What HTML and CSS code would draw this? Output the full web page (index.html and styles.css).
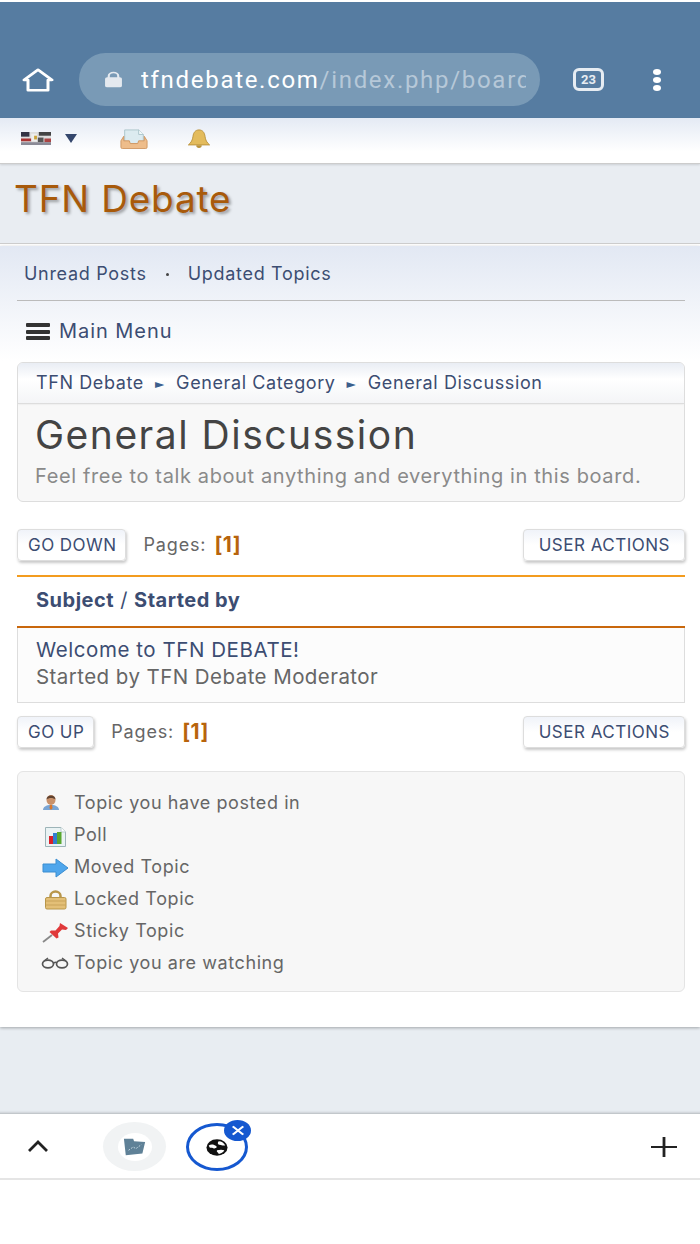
FILE: index.html
```html
<!DOCTYPE html>
<html lang="en">
<head>
<meta charset="utf-8">
<title>General Discussion</title>
<link rel="stylesheet" href="styles.css">
</head>
<body>
<header class="chrome">
  <svg class="ico-home" viewBox="0 0 32 28" width="32" height="24" preserveAspectRatio="none"><path d="M2 14 16 2l14 12h-4v12H6V14z" fill="none" stroke="#fff" stroke-width="3" stroke-linejoin="round"/></svg>
  <div class="omnibox">
    <svg class="ico-lock" viewBox="0 0 18 22" width="19" height="17" preserveAspectRatio="none"><path d="M4.500 9V6.500a4.500 4.500 0 0 1 9 0V9" fill="none" stroke="#e4e9ef" stroke-width="2"/><rect x="1" y="8" width="16" height="13" rx="2" fill="#e4e9ef"/></svg>
    <div class="url"><span class="url-host">tfndebate.com</span><span class="url-path">/index.php/board</span></div>
  </div>
  <div class="tabs">23</div>
  <div class="dots"><i></i><i></i><i></i></div>
</header>

<div class="userbar">
  <svg class="flag" viewBox="0 0 32 14" width="30" height="13" preserveAspectRatio="none"><rect width="32" height="14" fill="#ddd"/><rect width="9" height="5" fill="#334"/><rect x="0" y="7" width="11" height="3" fill="#a33"/><rect x="11" y="2" width="6" height="8" fill="#eee"/><rect x="14" y="4" width="3" height="4" fill="#c9a23a"/><rect x="19" y="0" width="13" height="4" fill="#444"/><rect x="18" y="6" width="6" height="5" fill="#555"/><rect x="25" y="7" width="7" height="4" fill="#a44"/><rect x="0" y="11" width="32" height="3" fill="#8a8a96"/></svg>
  <span class="caret"></span>
  <svg class="inbox" viewBox="0 0 30 22" width="28" height="20" preserveAspectRatio="none"><path d="M5 1h15l5 5v10H5z" fill="#dcebf0" stroke="#a9c3ca"/><path d="M20 1v5h5" fill="#f4fafb" stroke="#a9c3ca"/><path d="M4 8 1 13v7a1.500 1.500 0 0 0 1.500 1.500h25A1.500 1.500 0 0 0 29 20v-7l-3-5v5h-6l-1 3h-8l-1-3H4z" fill="#eebd8b" stroke="#cf9660"/></svg>
  <svg class="bell" viewBox="0 0 26 22" width="24" height="20" preserveAspectRatio="none"><path d="M13 1c4 0 6 3 6.500 7 .4 4 2 7 5 9.500H1.500c3-2.500 4.600-5.500 5-9.500C7 4 9 1 13 1z" fill="#e3bb5c" stroke="#b9923a"/><path d="M10 18h6a3 3 0 0 1-6 0z" fill="#b9923a"/></svg>
</div>

<div class="forumhead"><h1 class="forumtitle">TFN Debate</h1></div>

<main class="content">
  <nav class="quicklinks"><a>Unread Posts</a><span class="sep"></span><a>Updated Topics</a></nav>
  <div class="mainmenu"><span class="burger"><i></i><i></i><i></i></span><span>Main Menu</span></div>

  <section class="boardcard">
    <div class="crumbs"><a>TFN Debate</a><span class="arrow">►</span><a>General Category</a><span class="arrow">►</span><a>General Discussion</a></div>
    <div class="boardinfo">
      <h2 class="boardname">General Discussion</h2>
      <p class="boarddesc">Feel free to talk about anything and everything in this board.</p>
    </div>
  </section>

  <div class="pagerow pagerow-top">
    <a class="btn">GO DOWN</a>
    <span class="pages">Pages:<b>[1]</b></span>
    <a class="btn btn-right">USER ACTIONS</a>
  </div>

  <section class="topics">
    <div class="topichead"><b>Subject</b> / <b>Started by</b></div>
    <div class="topicrow">
      <a class="topictitle">Welcome to TFN DEBATE!</a>
      <div class="starter">Started by TFN Debate Moderator</div>
    </div>
  </section>

  <div class="pagerow pagerow-bottom">
    <a class="btn">GO UP</a>
    <span class="pages">Pages:<b>[1]</b></span>
    <a class="btn btn-right">USER ACTIONS</a>
  </div>

  <ul class="legend">
    <li><span class="lg-ico"><svg viewBox="0 0 28 24" width="28" height="24"><path d="M2 19c0-3 3-5 8-5s8 2 8 5z" fill="#7aa5d4"/><path d="M9 14h2l.6 3-1.600 2-1.600-2z" fill="#d9772c"/><ellipse cx="10" cy="9" rx="4.500" ry="5" fill="#c9916a"/><path d="M5.500 8.500C5.500 3 14.500 3 14.500 8.500 12 6.500 8 6.500 5.500 8.500z" fill="#5f4230"/></svg></span>Topic you have posted in</li>
    <li><span class="lg-ico"><svg viewBox="0 0 28 24" width="28" height="24"><path d="M4.500 4.500H20l4.500 4.500v14.500H4.500z" fill="#eaf3f4" stroke="#9db4b8"/><path d="M20 4.500V9h4.500" fill="#fff" stroke="#b9cccf"/><rect x="8" y="13" width="4" height="8" fill="#d9202a"/><rect x="12" y="10" width="4" height="11" fill="#2f7fd0"/><rect x="16" y="9" width="4.500" height="12" fill="#58a82e"/></svg></span>Poll</li>
    <li><span class="lg-ico"><svg viewBox="0 0 28 24" width="28" height="24"><path d="M2 9h13V4l12 9-12 9v-5H2z" fill="#4fa6ec" stroke="#3a8dd0"/></svg></span>Moved Topic</li>
    <li><span class="lg-ico"><svg viewBox="0 0 28 24" width="28" height="24"><path d="M9.500 11V9a5 4.500 0 0 1 10 0v2" fill="none" stroke="#b8964a" stroke-width="2.500"/><rect x="4.500" y="10.500" width="20.500" height="11.500" rx="1.500" fill="#e3bf77" stroke="#b8964a"/><path d="M5 14h20M5 18h20" stroke="#c9a35a"/></svg></span>Locked Topic</li>
    <li><span class="lg-ico"><svg viewBox="0 0 28 24" width="28" height="24"><path d="M2 23l9-7" stroke="#888" stroke-width="1.800"/><path d="M19 4l8 5-2 2-4-.5-4 4 .5 4-2 1-7-6.500 1.500-1.500 4.500 0 4-4.500z" fill="#e0393a"/></svg></span>Sticky Topic</li>
    <li><span class="lg-ico"><svg viewBox="0 0 28 24" width="28" height="24"><ellipse cx="7" cy="13" rx="5.500" ry="3.800" fill="none" stroke="#555" stroke-width="1.700"/><ellipse cx="21" cy="13" rx="5.500" ry="3.800" fill="none" stroke="#555" stroke-width="1.700"/><path d="M12.500 12c2-1 3-1 3 0M3 10l4-3M25 10l-4-3" fill="none" stroke="#555" stroke-width="1.500"/></svg></span>Topic you are watching</li>
  </ul>
</main>

<div class="footerband"></div>

<div class="tabstrip">
  <svg class="chev" viewBox="0 0 22 14" width="22" height="14"><path d="M2 12 11 3l9 9" fill="none" stroke="#222" stroke-width="2.800"/></svg>
  <div class="tab-inactive"><span class="tab-inner"><svg viewBox="0 0 26 22" width="24" height="18" preserveAspectRatio="none"><path d="M1 1h10l1 3 12 1-3 14L3 21z" fill="#5f8197"/><path d="M6 15l5-4 3 2 6-5" fill="none" stroke="#cfe0e8" stroke-dasharray="2 1.500"/></svg></span></div>
  <div class="tab-active">
    <svg viewBox="0 0 24 24" width="22" height="17" preserveAspectRatio="none"><circle cx="12" cy="12" r="11.500" fill="#111"/><path d="M3 9c3-2 6-1 8 1s-1 4-3 3-3 0-4-1zM14 3c3 0 6 3 7 6-3 1-4-1-6-1s-3-3-1-5zM12 16c3-1 6-1 8 0-1 3-4 5-6 5-1-2-3-3-2-5z" fill="#fff"/></svg>
    <span class="tab-close"><svg viewBox="0 0 12 12" width="14" height="11" preserveAspectRatio="none"><path d="M1.500 1.500l9 9M10.500 1.500l-9 9" stroke="#fff" stroke-width="2"/></svg></span>
  </div>
  <svg class="plus" viewBox="0 0 26 26" width="26" height="20" preserveAspectRatio="none"><path d="M13 0v26M0 13h26" stroke="#222" stroke-width="2.800"/></svg>
</div>
</body>
</html>
```

FILE: styles.css
```css
* { box-sizing: border-box; }
html, body { margin: 0; padding: 0; }
body {
  width: 700px;
  height: 1244px;
  overflow: hidden;
  background: #fff;
  font-family: Inter, Roboto, "Liberation Sans", sans-serif;
  color: #555;
}
a { color: #3c4d72; text-decoration: none; }
h1, h2, p, ul { margin: 0; padding: 0; }

.chrome {
  height: 116px;
  margin-top: 2px;
  background: #567ca1;
  display: flex;
  align-items: flex-start;
  padding-top: 51px;
}
.ico-home { margin: 15px 0 0 22px; flex: none; }
.omnibox {
  width: 461px;
  height: 53px;
  margin-left: 25px;
  background: #799ab6;
  border-radius: 27px;
  display: flex;
  align-items: center;
  padding-left: 25px;
  flex: none;
}
.ico-lock { flex: none; }
.url {
  width: 385px;
  margin-left: 18px;
  overflow: hidden;
  white-space: nowrap;
  font-family: Roboto, sans-serif;
  font-size: 24px;
  letter-spacing: 1.7px;
}
.url-host { color: #fff; }
.url-path { color: #b6c8d8; }
.tabs {
  width: 31px;
  height: 23px;
  margin: 15px 0 0 33px;
  border: 3px solid #e6ecf2;
  border-radius: 6px;
  color: #e6ecf2;
  font-family: Roboto, sans-serif;
  font-size: 13px;
  font-weight: 700;
  line-height: 17px;
  text-align: center;
  flex: none;
}
.dots { margin: 16px 0 0 49px; display: flex; flex-direction: column; gap: 2px; }
.dots i { width: 8px; height: 6px; background: #fff; border-radius: 50%; display: block; }

.userbar {
  height: 46px;
  background: linear-gradient(#e4eaf4, #fff 75%);
  border-bottom: 1px solid #ccc;
  box-shadow: 0 1px 2px rgba(0,0,0,.12);
  display: flex;
  align-items: center;
  padding: 0 0 4px 21px;
  position: relative;
}
.flag { flex: none; }
.caret {
  width: 0; height: 0;
  margin-left: 14px;
  border-left: 6px solid transparent;
  border-right: 6px solid transparent;
  border-top: 9px solid #34466c;
}
.inbox { margin-left: 43px; }
.bell { margin-left: 39px; }

.forumhead {
  height: 80px;
  background: #e9edf2;
  border-bottom: 1px solid #ccc;
  padding: 14px 0 0 14px;
}
.forumtitle {
  font-size: 37px;
  font-weight: 400;
  line-height: 41px;
  letter-spacing: 0.8px;
  color: #a85a0b;
  text-shadow: 2px 2px 3px rgba(0,0,0,.35);
}

.content {
  height: 781px;
  margin-top: 2px;
  background: linear-gradient(#e2e8f3, #fff 115px);
  box-shadow: 0 1px 3px rgba(0,0,0,.3);
  padding: 0 15px 0 17px;
  position: relative;
}
.quicklinks {
  height: 55px;
  padding: 16px 0 0 7px;
  border-bottom: 1px solid #bbb;
  font-size: 18px;
  letter-spacing: 0.7px;
  line-height: 24px;
  display: flex;
  align-items: flex-start;
}
.sep { width: 3px; height: 3px; margin: 11px 19px 0 19px; border-radius: 50%; background: #444; flex: none; }
.mainmenu {
  height: 61px;
  padding: 18px 0 0 9px;
  font-size: 20px;
  letter-spacing: 0.95px;
  line-height: 24px;
  color: #3c4d72;
  display: flex;
  align-items: flex-start;
}
.burger { width: 24px; margin: 4px 9px 0 0; display: flex; flex-direction: column; gap: 2.500px; }
.burger i { height: 4px; background: #333; border-radius: 1px; display: block; }

.boardcard {
  height: 140px;
  border: 1px solid #ddd;
  border-radius: 6px;
  background: #f8f8f8;
  overflow: hidden;
}
.crumbs {
  height: 41px;
  background: linear-gradient(#e9edf4, #fff 40%, #f4f5f7);
  border-bottom: 1px solid #ddd;
  box-shadow: 0 0 2px rgba(0,0,0,.1);
  padding: 8px 0 0 18px;
  font-size: 18px;
  letter-spacing: 0.6px;
  line-height: 24px;
  display: flex;
}
.arrow { margin: 1px 12px 0 11px; font-family: "DejaVu Sans", sans-serif; font-size: 12px; letter-spacing: 0; color: #3c5f8c; }
.boardinfo { padding: 9px 0 0 17px; }
.boardname {
  font-size: 39px;
  font-weight: 400;
  line-height: 44px;
  letter-spacing: 1.5px;
  color: #444;
}
.boarddesc {
  margin-top: 7px;
  font-size: 20px;
  letter-spacing: 0.62px;
  line-height: 24px;
  color: #8a8a8a;
}

.pagerow { display: flex; align-items: flex-start; }
.pagerow-top { margin-top: 27px; height: 46px; }
.pagerow-bottom { margin-top: 13px; height: 55px; }
.btn {
  height: 32px;
  padding: 0 9px 0 10px;
  border: 1px solid #ddd;
  border-radius: 4px;
  background: linear-gradient(#f0f3f9, #fff 50%);
  box-shadow: 1px 2px 3px rgba(0,0,0,.22);
  font-size: 17px;
  letter-spacing: 0.45px;
  line-height: 30px;
  flex: none;
}
.btn-right { margin-left: auto; padding: 0 14px 0 15px; letter-spacing: 0.5px; }
.pages {
  margin-left: 17px;
  font-size: 18px;
  letter-spacing: 0.85px;
  line-height: 31px;
  color: #666;
  display: flex;
}
.pages b { margin-left: 8px; font-size: 21px; letter-spacing: 0.5px; color: #b8640c; }

.topics { height: 128px; border: solid #ddd; border-width: 0 1px 1px; }
.topichead {
  height: 53px;
  margin: 0 -1px;
  background: #fff;
  border-top: 2px solid #f39c1f;
  border-bottom: 2px solid #c9670c;
  padding: 11px 0 0 19px;
  font-size: 20px;
  letter-spacing: 0.5px;
  line-height: 24px;
  color: #3c4d72;
}
.topichead b { font-weight: 700; }
.topicrow { background: #fcfcfc; height: 74px; padding: 8px 0 0 18px; font-size: 20.500px; letter-spacing: 0.44px; line-height: 27px; }
.topictitle { display: block; letter-spacing: 0.56px; }
.starter { color: #666; }

.legend {
  list-style: none;
  height: 221px;
  background: #f7f7f7;
  border: 1px solid #e4e4e4;
  border-radius: 6px;
  padding: 15px 0 0 23px;
  font-size: 18px;
  letter-spacing: 0.58px;
  color: #666;
}
.legend li { height: 32px; line-height: 32px; display: flex; align-items: center; }
.lg-ico { width: 33px; height: 24px; display: flex; align-items: center; flex: none; }

.footerband { height: 87px; background: #e8edf2; box-shadow: inset 0 -4px 3px -3px rgba(0,0,0,.25); }

.tabstrip {
  height: 66px;
  background: #fff;
  border-bottom: 2px solid #e5e5e5;
  display: flex;
  align-items: flex-start;
}
.chev { margin: 25px 0 0 27px; flex: none; }
.tab-inactive {
  width: 63px; height: 49px;
  margin: 8px 0 0 54px;
  border-radius: 50%;
  background: #f1f3f4;
  display: flex; align-items: center; justify-content: center;
  flex: none;
}
.tab-inner { width: 34px; height: 28px; border-radius: 50%; background: #fff; display: flex; align-items: center; justify-content: center; }
.tab-active {
  width: 62px; height: 48px;
  margin: 9px 0 0 20px;
  border: 3px solid #1558d0;
  border-radius: 50%;
  display: flex; align-items: center; justify-content: center;
  position: relative;
  flex: none;
}
.tab-close {
  position: absolute;
  top: -6px; right: -6px;
  width: 27px; height: 21px;
  border-radius: 50%;
  background: #1558d0;
  display: flex; align-items: center; justify-content: center;
}
.plus { margin: 23px 23px 0 auto; flex: none; }
```
